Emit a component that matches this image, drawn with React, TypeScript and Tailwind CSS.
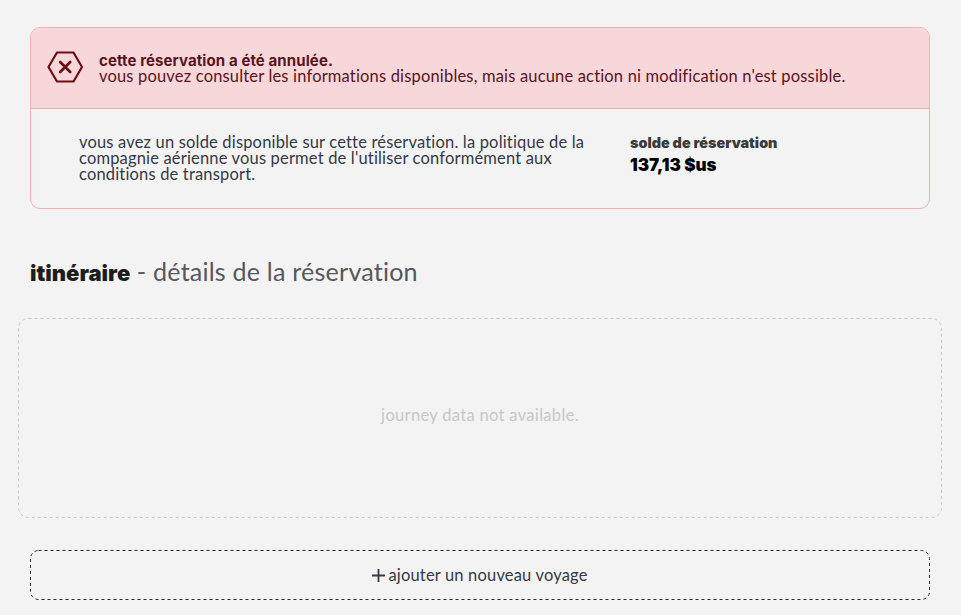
function CancelIcon() {
  return (
    <svg className="mb-[2px] shrink-0" width="36" height="32" viewBox="0 0 36 32" fill="none" stroke="#6b0f14" strokeWidth="2.2" strokeLinejoin="round" strokeLinecap="round">
      <path d="M10 1.5h16.5L35 16l-8.5 14.5H10L1.5 16z" />
      <path d="M13.2 11l10 10M23.2 11l-10 10" strokeWidth="2.7" />
    </svg>
  );
}

function DashedFrame({ width, height, radius, color }: { width: number; height: number; radius: number; color: string }) {
  return (
    <svg className="absolute inset-0" width={width} height={height} fill="none">
      <rect x="0.5" y="0.5" width={width - 1} height={height - 1} rx={radius} stroke={color} strokeDasharray="3 3" />
    </svg>
  );
}

export default function App() {
  return (
    <div className="bg-[#f3f3f3] font-['Lato',sans-serif] overflow-hidden h-[615px] text-[16.5px] tracking-[0.17px]">
      <div className="pt-[27px] px-[30px]">
        <div className="w-[900px] h-[182px] border border-[#f5aeb4] rounded-[10px] overflow-hidden">
          <div className="h-[81px] bg-[#f8d7da] border-b border-[#f5aeb4] flex items-center pl-[16px]">
            <CancelIcon />
            <div className="ml-[16px] mt-[1px] leading-[16px] text-[#58151c]">
              <p className="font-['Inter',sans-serif] font-bold text-[15px] leading-[15px] tracking-[0.1px]">cette réservation a été annulée.</p>
              <p>vous pouvez consulter les informations disponibles, mais aucune action ni modification n'est possible.</p>
            </div>
          </div>
          <div className="flex pl-[48px] pt-[25px]">
            <p className="w-[520px] mr-[31px] leading-[16px] text-[#333a45]">
              vous avez un solde disponible sur cette réservation. la politique de la compagnie aérienne vous permet de l'utiliser conformément aux conditions de transport.
            </p>
            <div className="font-['Inter',sans-serif] tracking-normal mt-[1px]">
              <p className="text-[14.4px] leading-[16px] font-black text-[#3a3a3a]">solde de réservation</p>
              <p className="text-[17px] leading-[22px] font-black text-black mt-[3px]">137,13 $us</p>
            </div>
          </div>
        </div>
        <h2 className="mt-[47px] h-[31px] text-[25.1px] tracking-[0.2px] leading-[30px] text-[#55585c]">
          <span className="font-['Inter',sans-serif] font-black text-[22px] tracking-normal text-[#1d1d1f]">itinéraire</span> - détails de la réservation
        </h2>
      </div>
      <div className="relative ml-[18px] mt-[31px] w-[924px] h-[200px] flex items-center justify-center pb-[6px] tracking-[0.32px] text-[#c8c8c8]">
        <DashedFrame width={924} height={200} radius={10} color="#c9c9c9" />
        journey data not available.
      </div>
      <div className="relative ml-[30px] mt-[32px] w-[900px] h-[50px] flex items-center justify-center gap-[3px] text-[#333a45]">
        <DashedFrame width={900} height={50} radius={8} color="#2a2a2a" />
        <svg width="13" height="13" viewBox="0 0 13 13" stroke="#333a45" strokeWidth="1.8">
          <path d="M6.5 0v13M0 6.5h13" />
        </svg>
        <span>ajouter un nouveau voyage</span>
      </div>
    </div>
  );
}
